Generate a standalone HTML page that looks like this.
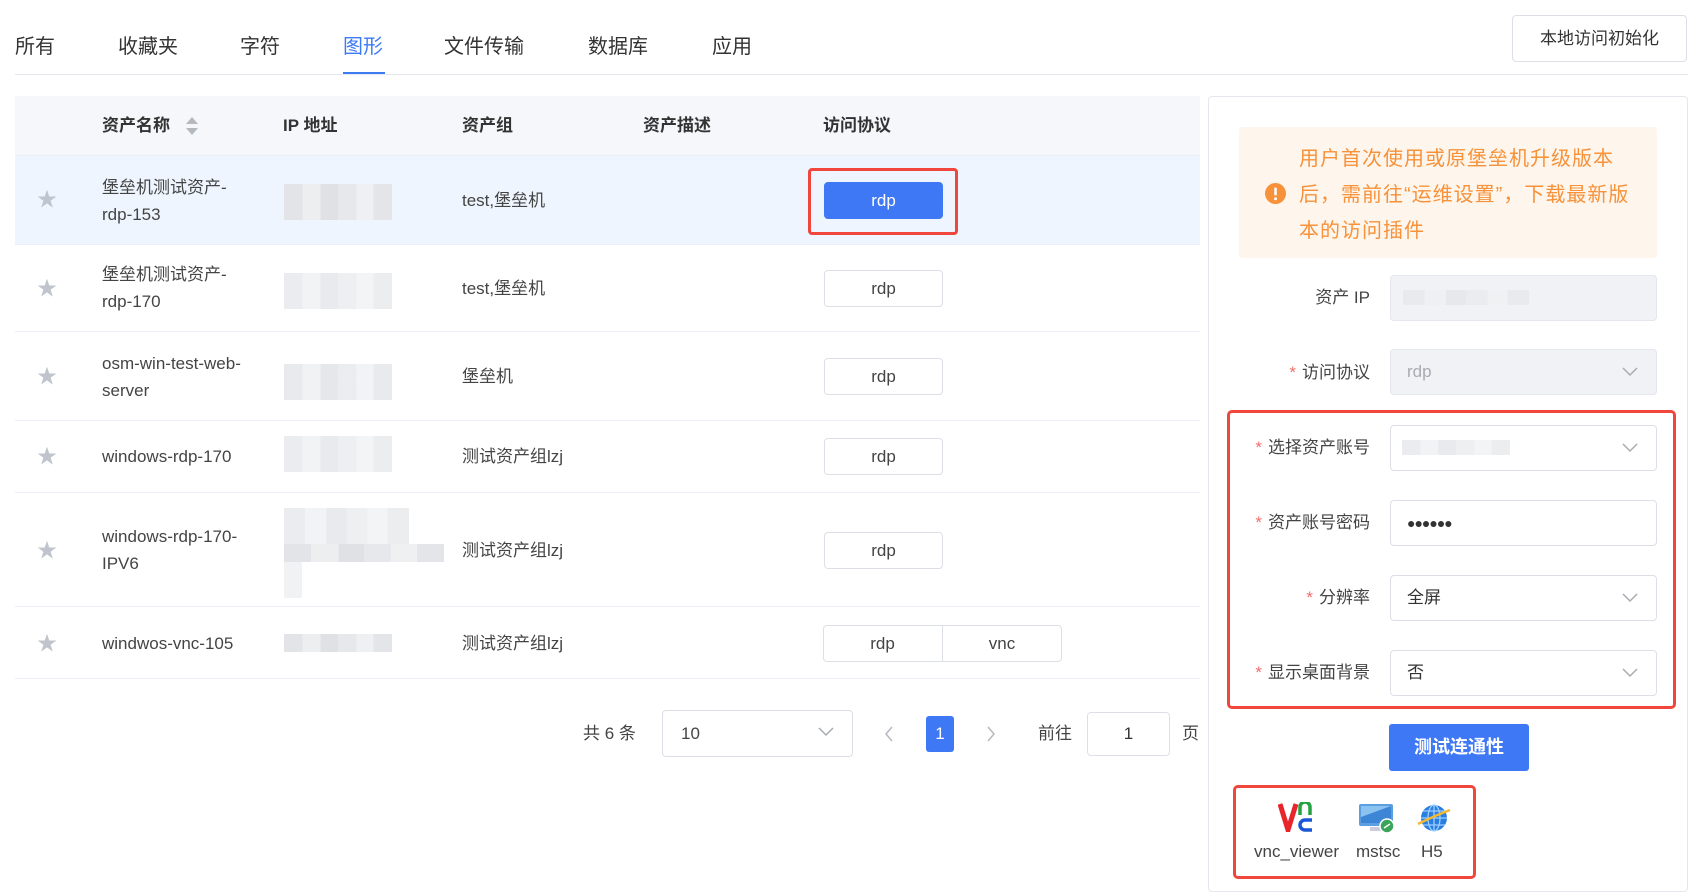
<!DOCTYPE html>
<html><head><meta charset="utf-8"><style>
*{box-sizing:border-box;margin:0;padding:0}
body{width:1707px;height:894px;background:#fff;position:relative;overflow:hidden;font-family:"Liberation Sans","Noto Sans CJK SC",sans-serif;color:#333}
.a{position:absolute;white-space:nowrap}
.tab{position:absolute;top:33px;font-size:20px;color:#333;line-height:28px}
.th{position:absolute;top:114px;font-size:17px;font-weight:bold;color:#333;line-height:24px}
.td{position:absolute;font-size:17px;color:#444;line-height:27px}
.row{position:absolute;left:15px;width:1185px;border-bottom:1px solid #ebeef5}
.star{position:absolute;left:37px;font-size:20px;color:#c0c4cc;line-height:20px}
.btn{position:absolute;height:37px;border:1px solid #dcdfe6;border-radius:4px;background:#fff;font-size:17px;color:#444;text-align:center;line-height:35px}
.blur{position:absolute;background:linear-gradient(90deg,#e2e4e8 0 17%,#eceef0 17% 34%,#dfe1e5 34% 50%,#e6e8eb 50% 67%,#eef0f2 67% 83%,#e3e5e8 83%)}
.lbl{position:absolute;right:337px;font-size:17px;color:#444;line-height:24px}
.lbl b{color:#f56c6c;font-weight:normal;margin-right:6px}
.inp{position:absolute;left:1390px;width:267px;height:46px;border:1px solid #dcdfe6;border-radius:4px;background:#fff;font-size:17px;line-height:44px;padding-left:16px;color:#333}
.chev{position:absolute;right:18px;top:14px}
</style></head><body>
<div class="tab" style="left:15px">所有</div>
<div class="tab" style="left:118px">收藏夹</div>
<div class="tab" style="left:240px">字符</div>
<div class="tab" style="left:343px;color:#3d7bf5">图形</div>
<div class="tab" style="left:444px">文件传输</div>
<div class="tab" style="left:588px">数据库</div>
<div class="tab" style="left:712px">应用</div>
<div class="a" style="left:343px;top:72px;width:42px;height:3px;background:#3d7bf5"></div>
<div class="a" style="left:15px;top:74px;width:1673px;height:1px;background:#e4e7ed"></div>
<div class="a" style="left:1512px;top:15px;width:175px;height:47px;border:1px solid #dcdfe6;border-radius:4px;font-size:17px;text-align:center;line-height:45px;color:#333">本地访问初始化</div>

<div class="a" style="left:15px;top:96px;width:1185px;height:60px;background:#f5f7fa;border-bottom:1px solid #ebeef5"></div>
<div class="th" style="left:102px">资产名称</div>
<svg class="a" style="left:185px;top:116px" width="14" height="20"><path d="M7 1 L13 8 H1Z" fill="#b4b8bf"/><path d="M7 19 L13 12 H1Z" fill="#b4b8bf"/></svg>
<div class="th" style="left:283px">IP 地址</div>
<div class="th" style="left:462px">资产组</div>
<div class="th" style="left:643px">资产描述</div>
<div class="th" style="left:823px">访问协议</div>

<div class="row" style="top:156px;height:89px;background:#eef5fe"></div>
<div class="row" style="top:245px;height:87px"></div>
<div class="row" style="top:332px;height:89px"></div>
<div class="row" style="top:421px;height:72px"></div>
<div class="row" style="top:493px;height:114px"></div>
<div class="row" style="top:607px;height:72px"></div>

<div class="star" style="top:190px">★</div>
<div class="td" style="left:102px;top:174px">堡垒机测试资产-<br>rdp-153</div>
<div class="blur" style="left:284px;top:184px;width:108px;height:36px"></div>
<div class="td" style="left:462px;top:187px">test,堡垒机</div>
<div class="a" style="left:808px;top:168px;width:150px;height:67px;border:3px solid #f0463c;border-radius:4px"></div>
<div class="btn" style="left:824px;top:182px;width:119px;background:#3f78f5;border-color:#3f78f5;color:#fff">rdp</div>

<div class="star" style="top:279px">★</div>
<div class="td" style="left:102px;top:261px">堡垒机测试资产-<br>rdp-170</div>
<div class="blur" style="left:284px;top:273px;width:108px;height:36px;opacity:.7"></div>
<div class="td" style="left:462px;top:275px">test,堡垒机</div>
<div class="btn" style="left:824px;top:270px;width:119px">rdp</div>

<div class="star" style="top:367px">★</div>
<div class="td" style="left:102px;top:350px">osm-win-test-web-<br>server</div>
<div class="blur" style="left:284px;top:364px;width:108px;height:36px;opacity:.8"></div>
<div class="td" style="left:462px;top:363px">堡垒机</div>
<div class="btn" style="left:824px;top:358px;width:119px">rdp</div>

<div class="star" style="top:447px">★</div>
<div class="td" style="left:102px;top:443px">windows-rdp-170</div>
<div class="blur" style="left:284px;top:436px;width:108px;height:36px;opacity:.7"></div>
<div class="td" style="left:462px;top:443px">测试资产组lzj</div>
<div class="btn" style="left:824px;top:438px;width:119px">rdp</div>

<div class="star" style="top:541px">★</div>
<div class="td" style="left:102px;top:523px">windows-rdp-170-<br>IPV6</div>
<div class="blur" style="left:284px;top:508px;width:125px;height:36px;opacity:.7"></div>
<div class="blur" style="left:284px;top:544px;width:160px;height:18px"></div>
<div class="a" style="left:284px;top:562px;width:18px;height:36px;background:#f1f2f3"></div>
<div class="td" style="left:462px;top:537px">测试资产组lzj</div>
<div class="btn" style="left:824px;top:532px;width:119px">rdp</div>

<div class="star" style="top:634px">★</div>
<div class="td" style="left:102px;top:630px">windwos-vnc-105</div>
<div class="blur" style="left:284px;top:634px;width:108px;height:18px"></div>
<div class="td" style="left:462px;top:630px">测试资产组lzj</div>
<div class="btn" style="left:823px;top:625px;width:239px;padding-right:120px">rdp</div>
<div class="a" style="left:942px;top:626px;width:1px;height:35px;background:#dcdfe6"></div>
<div class="a" style="left:943px;top:626px;width:118px;text-align:center;font-size:17px;line-height:35px;color:#444">vnc</div>

<div class="td" style="left:583px;top:720px">共 6 条</div>
<div class="a" style="left:662px;top:710px;width:191px;height:47px;border:1px solid #dcdfe6;border-radius:4px;font-size:17px;line-height:45px;padding-left:18px;color:#444">10
<svg class="chev" style="top:16px" width="16" height="10"><path d="M1 1 L8 8 L15 1" fill="none" stroke="#a8abb2" stroke-width="1.5"/></svg></div>
<svg class="a" style="left:884px;top:726px" width="10" height="16"><path d="M8 1 L2 8 L8 15" fill="none" stroke="#b4b8bf" stroke-width="1.5"/></svg>
<div class="a" style="left:926px;top:716px;width:28px;height:36px;background:#3f78f5;border-radius:3px;color:#fff;font-size:17px;text-align:center;line-height:36px">1</div>
<svg class="a" style="left:986px;top:726px" width="10" height="16"><path d="M2 1 L8 8 L2 15" fill="none" stroke="#b4b8bf" stroke-width="1.5"/></svg>
<div class="td" style="left:1038px;top:720px">前往</div>
<div class="a" style="left:1087px;top:712px;width:83px;height:44px;border:1px solid #dcdfe6;border-radius:4px;font-size:17px;line-height:42px;text-align:center;color:#333">1</div>
<div class="td" style="left:1182px;top:720px">页</div>

<div class="a" style="left:1208px;top:96px;width:480px;height:796px;border:1px solid #e4e7ed;border-radius:4px"></div>
<div class="a" style="left:1239px;top:127px;width:418px;height:131px;background:#fef6ec;border-radius:4px"></div>
<svg class="a" style="left:1265px;top:183px" width="21" height="21"><circle cx="10.5" cy="10.5" r="10.5" fill="#f7913a"/><rect x="9.2" y="4.5" width="2.6" height="8" rx="1" fill="#fff"/><circle cx="10.5" cy="15.8" r="1.5" fill="#fff"/></svg>
<div class="a" style="left:1299px;top:141px;font-size:20px;line-height:36px;color:#f7913a;letter-spacing:1px">用户首次使用或原堡垒机升级版本<br>后，需前往“运维设置”，下载最新版<br>本的访问插件</div>

<div class="lbl" style="top:286px">资产 IP</div>
<div class="inp" style="top:275px;background:#f0f2f5;border-color:#e4e7ed"></div>
<div class="blur" style="left:1403px;top:290px;width:126px;height:15px;opacity:.6"></div>

<div class="lbl" style="top:361px"><b>*</b>访问协议</div>
<div class="inp" style="top:349px;background:#f0f2f5;border-color:#e4e7ed;color:#a8abb2">rdp<svg class="chev" style="top:17px" width="16" height="10"><path d="M1 1 L8 8 L15 1" fill="none" stroke="#a8abb2" stroke-width="1.5"/></svg></div>

<div class="a" style="left:1227px;top:410px;width:449px;height:299px;border:3px solid #f0463c;border-radius:5px"></div>
<div class="lbl" style="top:436px"><b>*</b>选择资产账号</div>
<div class="inp" style="top:425px"><svg class="chev" style="top:17px" width="16" height="10"><path d="M1 1 L8 8 L15 1" fill="none" stroke="#a8abb2" stroke-width="1.5"/></svg></div>
<div class="blur" style="left:1402px;top:440px;width:108px;height:15px;opacity:.7"></div>
<div class="lbl" style="top:511px"><b>*</b>资产账号密码</div>
<div class="inp" style="top:500px;font-size:14px;letter-spacing:-1px;font-weight:bold">●●●●●●</div>
<div class="lbl" style="top:586px"><b>*</b>分辨率</div>
<div class="inp" style="top:575px">全屏<svg class="chev" style="top:17px" width="16" height="10"><path d="M1 1 L8 8 L15 1" fill="none" stroke="#a8abb2" stroke-width="1.5"/></svg></div>
<div class="lbl" style="top:661px"><b>*</b>显示桌面背景</div>
<div class="inp" style="top:650px">否<svg class="chev" style="top:17px" width="16" height="10"><path d="M1 1 L8 8 L15 1" fill="none" stroke="#a8abb2" stroke-width="1.5"/></svg></div>

<div class="a" style="left:1389px;top:724px;width:140px;height:47px;background:#3f78f5;border-radius:3px;color:#fff;font-size:18px;font-weight:bold;text-align:center;line-height:47px">测试连通性</div>

<div class="a" style="left:1233px;top:785px;width:243px;height:94px;border:3px solid #f0463c;border-radius:5px"></div>
<svg class="a" style="left:1278px;top:802px" width="38" height="30"><path d="M2 2 L10 28 L18 2" fill="none" stroke="#e8252a" stroke-width="5"/><path d="M22 13 V5 a5 5 0 0 1 10 0 V13" fill="none" stroke="#27a243" stroke-width="3.5"/><path d="M34 18 H27 a5 5 0 0 0 0 10 H34" fill="none" stroke="#1a57d6" stroke-width="3.5"/></svg>
<svg class="a" style="left:1358px;top:802px" width="38" height="32"><rect x="1" y="2" width="34" height="22" rx="2" fill="#5b9fe0"/><rect x="3" y="4" width="30" height="17" fill="#3d86d6"/><path d="M3 4 H33 L3 15Z" fill="#8cc2f0"/><rect x="12" y="25" width="12" height="4" fill="#ccd"/><circle cx="29" cy="24" r="7" fill="#3aa55a" stroke="#fff" stroke-width="1.5"/><path d="M26 26 L32 22" stroke="#fff" stroke-width="1.5"/></svg>
<svg class="a" style="left:1416px;top:802px" width="36" height="32"><circle cx="18" cy="16" r="13" fill="#2a7de1"/><path d="M5 16 H31 M18 3 V29 M7 9 H29 M7 23 H29" stroke="#9cd0ff" stroke-width="1.3" fill="none"/><ellipse cx="18" cy="16" rx="6" ry="13" fill="none" stroke="#9cd0ff" stroke-width="1.3"/><path d="M2 22 Q18 14 34 8" stroke="#f5b82e" stroke-width="2.5" fill="none"/></svg>
<div class="a" style="left:1254px;top:840px;font-size:17px;color:#444;line-height:24px">vnc_viewer</div>
<div class="a" style="left:1356px;top:840px;font-size:17px;color:#444;line-height:24px">mstsc</div>
<div class="a" style="left:1421px;top:840px;font-size:17px;color:#444;line-height:24px">H5</div>
</body></html>
